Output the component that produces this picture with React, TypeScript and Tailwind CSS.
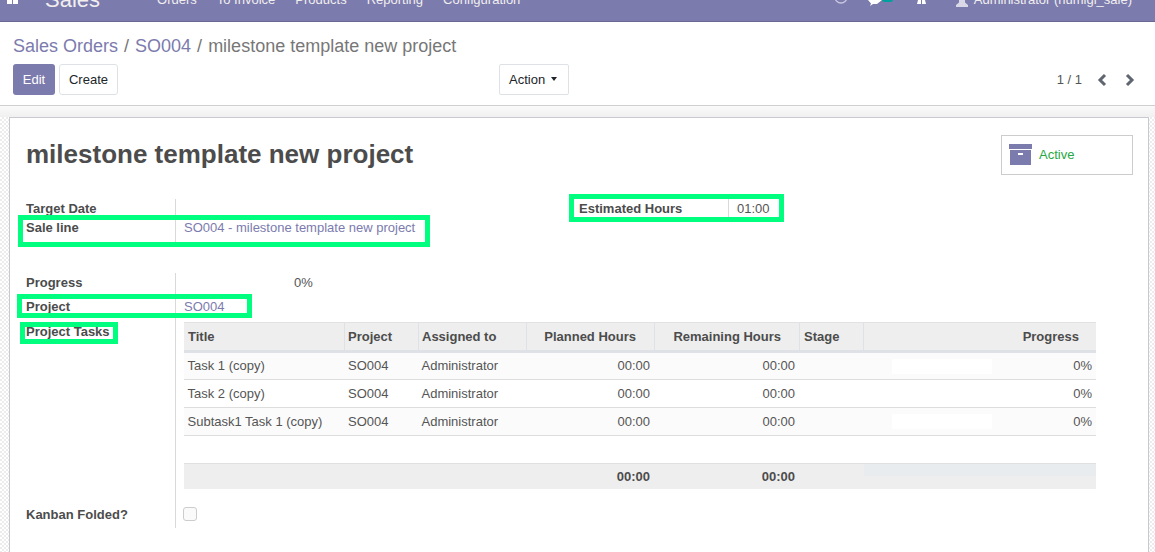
import React from "react";

const rows = [
  { title: "Task 1 (copy)", odd: true, h: "h-[27px]" },
  { title: "Task 2 (copy)", odd: false, h: "h-[28px]" },
  { title: "Subtask1 Task 1 (copy)", odd: true, h: "h-[28px]" },
];

function GreenBox({ className }: { className: string }) {
  return <div className={"pointer-events-none absolute border-[5px] border-[#00ff7f] " + className} />;
}

function Label({ children, className = "" }: { children: React.ReactNode; className?: string }) {
  return <div className={"w-[166px] shrink-0 border-r border-[#d9d9d9] pl-[16px] font-bold leading-[19px] text-[#4c4c4c] " + className}>{children}</div>;
}

export default function App() {
  return (
    <div className="h-[552px] w-[1155px] overflow-hidden bg-white text-[13px] text-[#4c4c4c]" style={{ fontFamily: '"Liberation Sans", Arial, sans-serif' }}>
      <nav className="flex h-[22px] items-start overflow-hidden border-b border-[#6b6794] bg-[#7c7bad] text-[#f0eeee]">
        <div className="-mt-[1px] ml-[7px] grid w-[11px] shrink-0 grid-cols-2 gap-[1px]">
          <span className="h-[5px] w-[5px] bg-white" />
          <span className="h-[5px] w-[5px] bg-white" />
        </div>
        <span className="-mt-[12px] ml-[27px] text-[22px] leading-[24px]">Sales</span>
        <div className="-mt-[8px] ml-[57px] flex gap-[20px] leading-[15px]">
          <span>Orders</span>
          <span>To Invoice</span>
          <span>Products</span>
          <span>Reporting</span>
          <span>Configuration</span>
        </div>
        <div className="ml-auto mr-[23px] flex items-start">
          <svg width="14" height="8" viewBox="0 0 14 8"><circle cx="7" cy="-3" r="6" fill="none" stroke="#c9c8de" strokeWidth="1.3" /></svg>
          <svg className="ml-[20px]" width="25" height="8" viewBox="0 0 25 8">
            <path d="M0 0h14L9 4H5L2 6l1-2.500z" fill="#fff" />
            <rect x="14" y="-4" width="11" height="6" rx="2.500" fill="#00a09d" />
          </svg>
          <svg className="ml-[23px]" width="11" height="8" viewBox="0 0 11 8"><path d="M1 4 2 0h3v4zM6 4V0h3l1 4z" fill="#fff" /></svg>
          <svg className="ml-[29px]" width="12" height="8" viewBox="0 0 12 8"><path d="M3 0h6v2.500L12 5v2H0V5l3-2.500z" fill="#d8d8e6" /></svg>
          <span className="-mt-[8px] ml-[6px] leading-[15px]">Administrator (numigi_sale)</span>
        </div>
      </nav>

      <header className="h-[84px] border-b border-[#cfcfcf] px-[13px] pt-[13px]">
        <div className="flex h-[22px] items-center text-[18px] leading-[22px]">
          <span className="text-[#7c7bad]">Sales Orders</span>
          <span className="mx-[6px] text-[#777777]">/</span>
          <span className="text-[#7c7bad]">SO004</span>
          <span className="mx-[6px] text-[#777777]">/</span>
          <span className="text-[#777777]">milestone template new project</span>
        </div>
        <div className="mt-[7px] flex items-center">
          <button className="h-[31px] w-[42px] rounded-[3px] bg-[#7c7bad] text-white">Edit</button>
          <button className="ml-[4px] h-[31px] w-[59px] rounded-[3px] border border-[#dee2e6] text-[#212529]">Create</button>
          <button className="ml-[381px] flex h-[31px] w-[70px] items-center gap-[6px] rounded-[2px] border border-[#dee2e6] pl-[9px] text-[#212529]">
            Action
            <span className="mb-[2px] h-0 w-0 border-x-[3.5px] border-t-[4px] border-x-transparent border-t-[#212529]" />
          </button>
          <span className="ml-auto text-[#555555]">1 / 1</span>
          <svg className="ml-[15px]" width="10" height="14" viewBox="0 0 10 14"><path d="M8 2 3 7l5 5" fill="none" stroke="#5f6670" strokeWidth="3" /></svg>
          <svg className="ml-[18px] mr-[7px]" width="10" height="14" viewBox="0 0 10 14"><path d="m2 2 5 5-5 5" fill="none" stroke="#5f6670" strokeWidth="3" /></svg>
        </div>
      </header>

      <div className="h-[11px] bg-gradient-to-b from-[#fafafa] to-[#f0f0f0]" />

      <main className="h-[435px] bg-[repeating-conic-gradient(#ececec_0_25%,#ffffff_0_50%)] bg-[length:4px_4px] px-[9px]">
        <div className="relative h-[445px] w-[1140px] border border-[#c9c9d1] bg-white">
          <div className="flex items-start justify-between pl-[16px] pr-[15px] pt-[17px]">
            <h1 className="mt-[3px] text-[26px] font-bold leading-[32px]">milestone template new project</h1>
            <div className="flex h-[40px] w-[132px] items-center border border-[#cccccc]">
              <svg className="ml-[7px]" width="23" height="22" viewBox="0 0 23 22"><path d="M0 0h23v5H0zM1 6h21v15H1z" fill="#7c7bad" /><rect x="9" y="9" width="5" height="2" fill="#fff" /></svg>
              <span className="ml-[7px] text-[#28a745]">Active</span>
            </div>
          </div>

          <div className="mt-[24px] flex h-[74px] items-start">
            <div className="w-[560px]">
              <div className="flex h-[19px]"><Label>Target Date</Label></div>
              <div className="flex h-[28px]">
                <Label>Sale line</Label>
                <div className="pl-[8px] leading-[19px] text-[#7c7bad]">SO004 - milestone template new project</div>
              </div>
            </div>
            <div className="flex h-[23px]">
              <span className="w-[159px] border-r border-[#d9d9d9] pl-[9px] font-bold leading-[19px]">Estimated Hours</span>
              <span className="pl-[8px] leading-[19px] text-[#555555]">01:00</span>
            </div>
          </div>

          <div className="flex h-[24px]"><Label>Progress</Label><div className="pl-[118px] leading-[19px] text-[#555555]">0%</div></div>
          <div className="flex h-[25px]"><Label>Project</Label><div className="pl-[8px] leading-[19px] text-[#7c7bad]">SO004</div></div>

          <div className="flex">
            <Label>Project Tasks</Label>
            <div className="ml-[8px] w-[912px]">
              <div className="flex h-[28px] items-center border-t border-[#e2e2e2] bg-[#eeeeee] font-bold">
                <div className="flex h-full w-[161px] items-center border-r border-[#dee2e6] pl-[4px]">Title</div>
                <div className="flex h-full w-[74px] items-center border-r border-[#dee2e6] pl-[3px]">Project</div>
                <div className="flex h-full w-[108px] items-center border-r border-[#dee2e6] pl-[3px]">Assigned to</div>
                <div className="flex h-full w-[128px] items-center justify-end border-r border-[#dee2e6] pr-[18px]">Planned Hours</div>
                <div className="flex h-full w-[145px] items-center justify-end border-r border-[#dee2e6] pr-[18px]">Remaining Hours</div>
                <div className="flex h-full w-[64px] items-center border-r border-[#dee2e6] pl-[4px]">Stage</div>
                <div className="flex h-full flex-1 items-center justify-end pr-[17px]">Progress</div>
              </div>
              <div className="h-[3px] bg-[#dee2e6]" />
              {rows.map((r) => (
                <div key={r.title} className={"flex items-center border-b border-[#dddddd] text-[#555555] " + r.h + (r.odd ? " bg-[#fbfbfb]" : " bg-white")}>
                  <div className="w-[161px] pl-[3.5px]">{r.title}</div>
                  <div className="w-[74px] pl-[3px]">SO004</div>
                  <div className="w-[108px] pl-[2.5px]">Administrator</div>
                  <div className="w-[128px] pr-[5px] text-right">00:00</div>
                  <div className="w-[145px] pr-[5px] text-right">00:00</div>
                  <div className="w-[92px]" />
                  <div className={"h-[15px] w-[100px] " + (r.odd ? "bg-white" : "")} />
                  <div className="flex-1 pr-[4px] text-right">0%</div>
                </div>
              ))}
              <div className="relative mt-[27px] flex h-[26px] items-center border-t border-[#e0e0e0] bg-[#eeeeee] font-bold">
                <div className="w-[343px]" />
                <div className="w-[128px] pr-[5px] text-right">00:00</div>
                <div className="w-[145px] pr-[5px] text-right">00:00</div>
                <div className="ml-[64px] h-[12px] flex-1 self-start bg-[#e9ecef]" />
              </div>
            </div>
          </div>

          <div className="flex h-[39px]">
            <Label className="pt-[16px]">Kanban Folded?</Label>
            <div className="pl-[7px] pt-[18px]"><div className="h-[14px] w-[14px] rounded-[3px] border border-[#cccccc] bg-[#fafafa]" /></div>
          </div>

          <GreenBox className="left-[8px] top-[97px] h-[32px] w-[412px]" />
          <GreenBox className="left-[7px] top-[176px] h-[24px] w-[235px]" />
          <GreenBox className="left-[10px] top-[204px] h-[22px] w-[98px]" />
          <GreenBox className="left-[559px] top-[76px] h-[28px] w-[215px]" />
        </div>
      </main>
    </div>
  );
}
